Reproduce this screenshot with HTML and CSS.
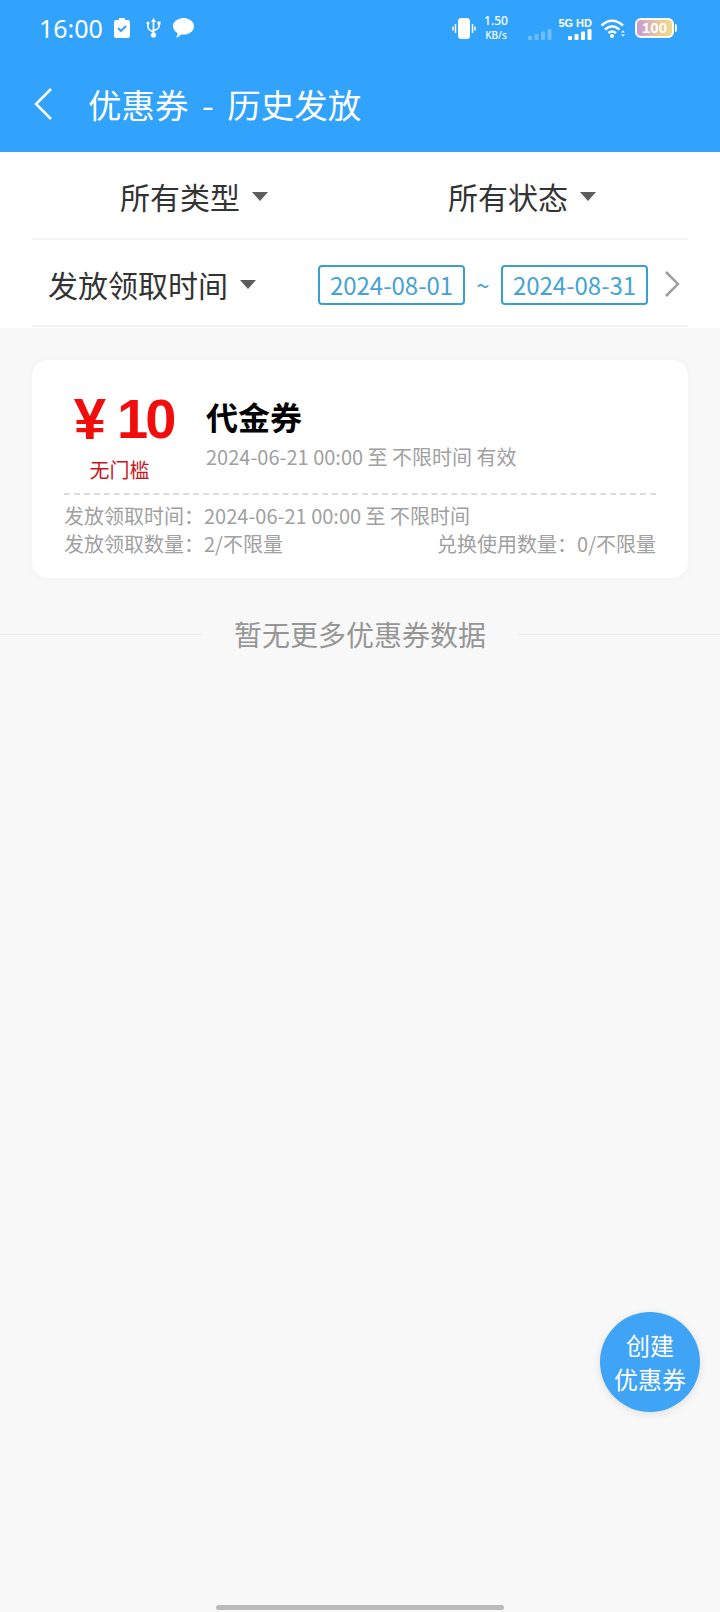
FILE: index.html
```html
<!DOCTYPE html>
<html lang="zh-CN">
<head>
    <meta charset="UTF-8">
    <meta name="viewport" content="width=device-width, initial-scale=1.0">
    <title>优惠券 - 历史发放</title>
    <link rel="stylesheet" href="styles.css">
</head>
<body>
    <header class="top">
        <div class="status">
            <div class="status-left">
                <span class="time">16:00</span>
                <svg class="ic-clip" width="16" height="20" viewBox="0 0 16 20">
                    <path d="M5 0h6v2h3a2 2 0 0 1 2 2v14a2 2 0 0 1-2 2H2a2 2 0 0 1-2-2V4a2 2 0 0 1 2-2h3z" fill="#fff"/>
                    <path d="M4 10l3 3 5-5" fill="none" stroke="#31a3fd" stroke-width="2"/>
                </svg>
                <svg class="ic-usb" width="15" height="20" viewBox="0 0 15 20">
                    <path d="M7.500 0l2.500 4H8.400v11H6.600V4H5z" fill="#fff"/>
                    <circle cx="7.500" cy="17" r="2.600" fill="#fff"/>
                    <path d="M2 6v3q0 3 5 4.500M13 6v2q0 3-5 4.500" fill="none" stroke="#fff" stroke-width="1.600"/>
                    <rect x="0.500" y="3.500" width="3" height="3" rx="1.500" fill="#fff"/>
                    <rect x="11.500" y="3.500" width="3" height="3" fill="#fff"/>
                </svg>
                <svg class="ic-chat" width="21" height="20" viewBox="0 0 21 20">
                    <path d="M10.500 0C16.300 0 21 3.700 21 8.300s-4.700 8.300-10.500 8.300c-.8 0-1.500-.1-2.200-.2C6.800 18 5 19.200 3 19.500c1-1.200 1.500-2.800 1.500-4.500C1.800 13.500 0 11.100 0 8.300 0 3.700 4.700 0 10.500 0z" fill="#fff"/>
                </svg>
            </div>
            <div class="status-right">
                <svg class="ic-vib" width="24" height="21" viewBox="0 0 24 21">
                    <rect x="6" y="0" width="12" height="21" rx="3.500" fill="#fff"/>
                    <path d="M3.500 6v9M1 8.500v4M20.500 6v9M23 8.500v4" stroke="#fff" stroke-width="1.500" fill="none"/>
                </svg>
                <div class="speed"><span>1.50</span><span class="speed-unit">KB/s</span></div>
                <svg class="ic-faint" width="24" height="11" viewBox="0 0 24 11">
                    <rect x="0" y="7" width="4" height="4" rx="1"/>
                    <rect x="6.500" y="5" width="4" height="6" rx="1"/>
                    <rect x="13" y="2.500" width="4" height="8.500" rx="1"/>
                    <rect x="19.500" y="0" width="4" height="11" rx="1"/>
                </svg>
                <div class="net">
                    <span class="net-label">5G HD</span>
                    <svg width="24" height="11" viewBox="0 0 24 11" fill="#fff">
                        <rect x="0" y="7" width="4" height="4" rx="1"/>
                        <rect x="6.500" y="5" width="4" height="6" rx="1"/>
                        <rect x="13" y="2.500" width="4" height="8.500" rx="1"/>
                        <rect x="19.500" y="0" width="4" height="11" rx="1"/>
                    </svg>
                </div>
                <svg class="ic-wifi" width="25" height="20" viewBox="0 0 25 20">
                    <path d="M1.500 7.500Q12 -2 23 7.500M5 11.500Q12 5 19.500 11.500M8.500 15Q12 12 16 15" fill="none" stroke="#fff" stroke-width="2.500"/>
                    <circle cx="12" cy="18" r="2" fill="#fff"/>
                    <path d="M21 14.500l2-2 2 2zM21 16.500l2 2 2-2z" fill="#fff"/>
                </svg>
                <div class="battery">
                    <div class="battery-body">100</div>
                    <span class="battery-cap"></span>
                </div>
            </div>
        </div>
        <div class="title-row">
            <svg class="back" width="20" height="34" viewBox="0 0 20 34">
                <path d="M18 2L3 17l15 15" fill="none" stroke="#fff" stroke-width="2.500"/>
            </svg>
            <h1>优惠券 - 历史发放</h1>
        </div>
    </header>

    <section class="filters">
        <div class="filter-row first">
            <div class="filter"><span>所有类型</span><i class="caret"></i></div>
            <div class="filter"><span>所有状态</span><i class="caret"></i></div>
        </div>
        <div class="filter-row second">
            <div class="filter time-filter"><span>发放领取时间</span><i class="caret"></i></div>
            <div class="range">
                <span class="date">2024-08-01</span>
                <span class="tilde">~</span>
                <span class="date">2024-08-31</span>
                <svg class="next" width="16" height="26" viewBox="0 0 16 26">
                    <path d="M2 1l12 12L2 25" fill="none" stroke="#a0a0a0" stroke-width="2.500"/>
                </svg>
            </div>
        </div>
    </section>

    <main class="content">
        <article class="card">
            <div class="card-top">
                <div class="price">
                    <div class="amount"><span class="yen">¥</span><span class="num">10</span></div>
                    <div class="limit">无门槛</div>
                </div>
                <div class="info">
                    <h3>代金券</h3>
                    <p>2024-06-21 00:00 至 不限时间 有效</p>
                </div>
            </div>
            <div class="card-bottom">
                <div>发放领取时间：2024-06-21 00:00 至 不限时间</div>
                <div class="counts"><span>发放领取数量：2/不限量</span><span>兑换使用数量：0/不限量</span></div>
            </div>
        </article>

        <div class="no-more"><span>暂无更多优惠券数据</span></div>

        <button class="fab">创建<br>优惠券</button>
        <div class="home-bar"></div>
    </main>
</body>
</html>
```

FILE: styles.css
```css
* {
    box-sizing: border-box;
}

html, body {
    margin: 0;
    padding: 0;
    height: 1612px;
    overflow: hidden;
}

body {
    display: flex;
    flex-direction: column;
    font-family: "Noto Sans CJK SC", "Noto Sans", sans-serif;
    background: #f8f8f8;
    color: #333;
}

/* 顶部 */
.top {
    height: 152px;
    background: #31a3fd;
    color: white;
}

.status {
    display: flex;
    justify-content: space-between;
    align-items: center;
    height: 56px;
    padding: 0 43px 0 39px;
}

.status-left, .status-right {
    display: flex;
    align-items: center;
}

.time {
    font-family: "Noto Sans", sans-serif;
    font-size: 25px;
    line-height: 30px;
    width: 75px;
}

.ic-usb {
    margin-left: 16px;
}

.ic-chat {
    margin-left: 12px;
}

.speed {
    display: flex;
    flex-direction: column;
    align-items: center;
    margin-left: 8px;
    width: 24px;
    font-family: "Noto Sans", sans-serif;
    font-size: 12px;
    line-height: 14px;
    font-weight: 500;
}

.speed-unit {
    font-size: 10px;
}

.ic-faint {
    margin: 12px 0 0 20px;
    fill: rgba(255, 255, 255, 0.3);
}

.net {
    display: flex;
    flex-direction: column;
    align-items: flex-end;
    width: 33px;
    margin-left: 7px;
}

.net svg {
    display: block;
}

.net-label {
    font-family: "Liberation Sans", sans-serif;
    font-size: 11px;
    line-height: 12px;
    font-weight: 700;
    white-space: nowrap;
}

.ic-wifi {
    margin-left: 8px;
}

.battery {
    display: flex;
    align-items: center;
    margin-left: 10px;
}

.battery-body {
    width: 39px;
    height: 20px;
    border: 2px solid white;
    border-radius: 6px;
    background: linear-gradient(90deg, #c89ad8, #e8c79a 60%, #f0d98f);
    font-family: "Liberation Sans", sans-serif;
    font-size: 15px;
    line-height: 16px;
    font-weight: 700;
    text-align: center;
}

.battery-cap {
    width: 2px;
    height: 8px;
    margin-left: 1px;
    background: white;
    border-radius: 0 2px 2px 0;
}

.title-row {
    display: flex;
    align-items: center;
    height: 96px;
    padding-left: 33px;
}

.title-row h1 {
    margin: 0 0 0 35px;
    font-size: 33.500px;
    line-height: 44px;
    font-weight: 400;
    word-spacing: 6px;
}

/* 筛选 */
.filters {
    background: white;
    height: 176px;
    padding: 0 32px;
}

.filter-row {
    display: flex;
    align-items: center;
    border-bottom: 2px solid #f4f4f4;
}

.filter-row.first {
    height: 88px;
    padding: 2px 0 0 88px;
}

.filter-row.first .filter:first-child {
    flex: 0 0 328px;
}

.filter-row.second {
    height: 87px;
    justify-content: space-between;
    padding: 3px 0 0 16px;
}

.filter {
    display: flex;
    align-items: center;
    font-size: 30px;
    line-height: 40px;
    color: #333;
}

.caret {
    width: 0;
    height: 0;
    margin-left: 12px;
    border-left: 8px solid transparent;
    border-right: 8px solid transparent;
    border-top: 9px solid #5c5c5c;
}

.range {
    display: flex;
    align-items: center;
    padding-right: 8px;
}

.date {
    width: 147px;
    height: 40px;
    margin-top: 2px;
    border: 2px solid #3a9fd0;
    border-radius: 4px;
    color: #45a3d3;
    font-size: 24px;
    line-height: 36px;
    text-align: center;
}

.tilde {
    width: 36px;
    color: #45a3d3;
    font-size: 24px;
    text-align: center;
}

.next {
    margin-left: 16px;
}

/* 列表 */
.content {
    flex: 1;
    position: relative;
    display: flex;
    flex-direction: column;
    padding-top: 32px;
}

.card {
    margin: 0 32px;
    height: 218px;
    padding: 22px 32px 0;
    background: white;
    border-radius: 16px;
    box-shadow: 0 0 8px rgba(0, 0, 0, 0.03);
}

.card-top {
    display: flex;
    height: 113px;
    border-bottom: 2px dashed #dcdcdc;
}

.price {
    width: 111px;
    text-align: center;
}

.amount {
    display: flex;
    justify-content: center;
    align-items: center;
    height: 66px;
    padding: 8px 0 0 8px;
    color: #f20d0d;
    font-family: "Liberation Sans", sans-serif;
    font-weight: 700;
}

.yen {
    font-size: 58px;
    line-height: 58px;
    margin-right: 11px;
}

.num {
    font-size: 56px;
    line-height: 58px;
    letter-spacing: -3px;
}

.limit {
    margin-top: 8px;
    font-size: 20px;
    line-height: 28px;
    color: #c8161d;
}

.info {
    margin-left: 31px;
    padding-top: 12px;
}

.info h3 {
    margin: 0;
    font-size: 32px;
    line-height: 44px;
    font-weight: 700;
    color: black;
}

.info p {
    margin: 5px 0 0;
    font-size: 20px;
    line-height: 28px;
    color: #a0a0a0;
}

.card-bottom {
    padding-top: 7px;
    font-size: 20px;
    line-height: 28px;
    color: #a0a0a0;
}

.counts {
    display: flex;
    justify-content: space-between;
}

.no-more {
    display: flex;
    align-items: center;
    gap: 32px;
    margin-top: 36px;
    font-size: 28px;
    line-height: 40px;
    color: #969696;
}

.no-more::before, .no-more::after {
    content: "";
    flex: 1;
    height: 1px;
    background: #ececec;
}

.fab {
    position: absolute;
    top: 984px;
    right: 20px;
    width: 100px;
    height: 100px;
    padding: 0;
    border: none;
    border-radius: 50%;
    background: #3fa4f5;
    box-shadow: 0 2px 8px rgba(0, 0, 0, 0.1);
    color: white;
    font-family: inherit;
    font-size: 24px;
    line-height: 34px;
}

.home-bar {
    width: 288px;
    height: 5px;
    margin: auto auto 2px;
    background: #bbb;
    border-radius: 3px;
}
```
